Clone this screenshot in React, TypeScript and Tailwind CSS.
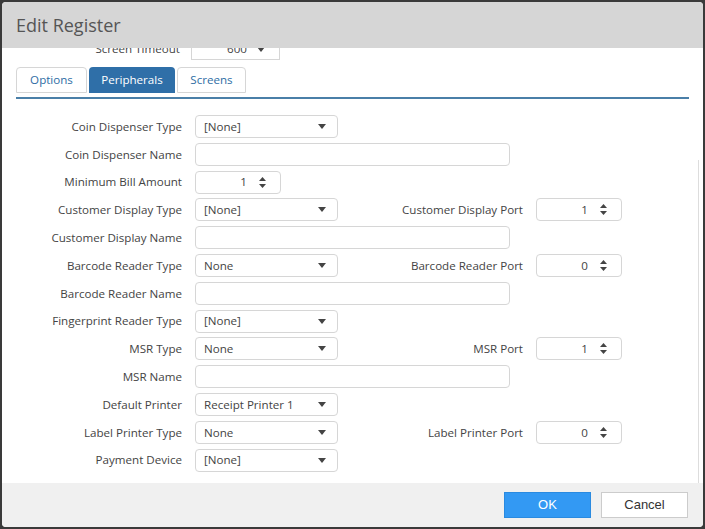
import React from 'react';

const Caret = () => (
  <svg width="8" height="5" viewBox="0 0 8 5"><path d="M0 0h8L4 5z" fill="#444" /></svg>
);

const Spin = ({ v }: { v: string }) => (
  <div className="w-[86px] h-[23px] border border-[#d6d6d6] rounded-sm flex items-center justify-end pr-[14px] gap-[12px] bg-white">
    <span>{v}</span>
    <div className="flex flex-col gap-[3px]">
      <svg width="7" height="4" viewBox="0 0 7 4"><path d="M0 4h7L3.5 0z" fill="#444" /></svg>
      <svg width="7" height="4" viewBox="0 0 7 4"><path d="M0 0h7L3.5 4z" fill="#444" /></svg>
    </div>
  </div>
);

const Select = ({ v }: { v: string }) => (
  <div className="w-[143px] h-[23px] border border-[#d6d6d6] rounded-sm flex items-center justify-between pl-[8px] pr-[11px] bg-white">
    <span>{v}</span>
    <Caret />
  </div>
);

const Text = () => <div className="w-[315px] h-[23px] border border-[#d6d6d6] rounded-sm bg-white" />;

type Row = { l: string; c: React.ReactNode; rl?: string; rv?: string };
const rows: Row[] = [
  { l: 'Coin Dispenser Type', c: <Select v="[None]" /> },
  { l: 'Coin Dispenser Name', c: <Text /> },
  { l: 'Minimum Bill Amount', c: <Spin v="1" /> },
  { l: 'Customer Display Type', c: <Select v="[None]" />, rl: 'Customer Display Port', rv: '1' },
  { l: 'Customer Display Name', c: <Text /> },
  { l: 'Barcode Reader Type', c: <Select v="None" />, rl: 'Barcode Reader Port', rv: '0' },
  { l: 'Barcode Reader Name', c: <Text /> },
  { l: 'Fingerprint Reader Type', c: <Select v="[None]" /> },
  { l: 'MSR Type', c: <Select v="None" />, rl: 'MSR Port', rv: '1' },
  { l: 'MSR Name', c: <Text /> },
  { l: 'Default Printer', c: <Select v="Receipt Printer 1" /> },
  { l: 'Label Printer Type', c: <Select v="None" />, rl: 'Label Printer Port', rv: '0' },
  { l: 'Payment Device', c: <Select v="[None]" /> },
];

export default function App() {
  return (
    <div className="w-[705px] h-[529px] bg-[#3a3a3a] p-[2px] text-[11.6px] text-[#444]" style={{ fontFamily: '"Open Sans", sans-serif' }}>
      <div className="h-full flex flex-col bg-white rounded-sm overflow-hidden">
        <div className="h-[46px] shrink-0 bg-[#d6d6d6] flex items-center pl-[14px] text-[18px] text-[#555] relative z-10">Edit Register</div>
        <div className="flex-1 flex relative">
          <div className="flex-1 flex flex-col">
            <div className="h-[14px] overflow-hidden relative">
              <div className="absolute -top-[10px] left-0 flex items-center">
                <span className="w-[178px] text-right">Screen Timeout</span>
                <div className="ml-[11px] w-[89px] h-[22px] border border-[#d6d6d6] flex items-center justify-end pr-[14px] gap-[10px]">
                  <span>600</span><Caret />
                </div>
              </div>
            </div>
            <div className="flex gap-[2px] pl-[14px] mt-[5px]">
              <div className="w-[71px] h-[26px] border border-[#d6d6d6] rounded-t-sm flex items-center justify-center text-[#2e6da4]">Options</div>
              <div className="w-[86px] h-[26px] bg-[#2f6fa8] text-white rounded-t-sm flex items-center justify-center">Peripherals</div>
              <div className="w-[69px] h-[26px] border border-[#d6d6d6] rounded-t-sm flex items-center justify-center text-[#2e6da4]">Screens</div>
            </div>
            <div className="ml-[14px] mr-[14px] mt-[4px] h-[2px] bg-[#4a7fa8]" />
            <div className="flex flex-col gap-[4.8px] mt-[16px]">
              {rows.map((r) => (
                <div key={r.l} className="flex items-center h-[23px]">
                  <span className="w-[180px] text-right shrink-0">{r.l}</span>
                  <div className="ml-[13px] shrink-0">{r.c}</div>
                  {r.rl && (
                    <>
                      <span className="w-[185px] text-right shrink-0">{r.rl}</span>
                      <div className="ml-[13px] shrink-0"><Spin v={r.rv!} /></div>
                    </>
                  )}
                </div>
              ))}
            </div>
          </div>
          <div className="absolute right-[4px] top-[112px] bottom-0 w-px bg-[#ddd]" />
        </div>
        <div className="h-[44px] shrink-0 bg-[#f0f0f0] flex items-center justify-end gap-[10px] pr-[15px]">
          <div className="w-[87px] h-[26px] bg-[#3399f3] text-white flex items-center justify-center text-[13px] border border-[#2a8ae0]" style={{ fontFamily: '"Liberation Sans", sans-serif' }}>OK</div>
          <div className="w-[87px] h-[26px] bg-white border border-[#ccc] flex items-center justify-center text-[13px] text-[#333]" style={{ fontFamily: '"Liberation Sans", sans-serif' }}>Cancel</div>
        </div>
      </div>
    </div>
  );
}
